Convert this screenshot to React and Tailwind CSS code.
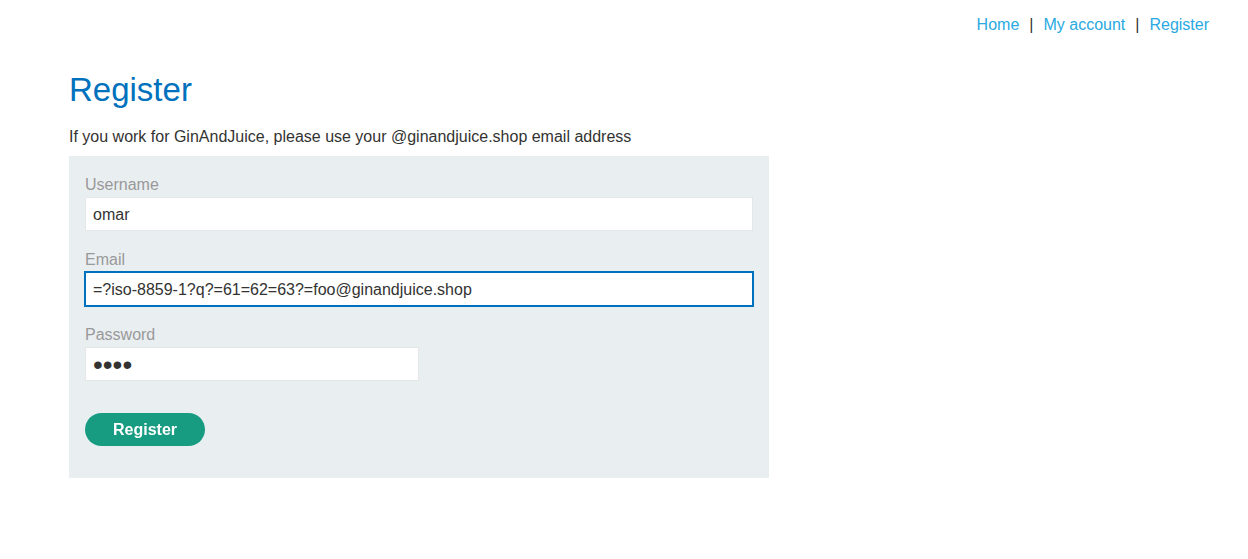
import React, { useEffect, useRef } from 'react';

// Register page: top nav links, heading, and the grey form panel.

const email = '=?iso-8859-1?q?=61=62=63?=foo@ginandjuice.shop';

export default function App() {
  const emailRef = useRef(null);

  useEffect(() => {
    const el = emailRef.current;
    if (!el) return;
    el.focus();
    el.setSelectionRange(email.length, email.length);
  }, []);

  return (
    <div className="min-h-[559px] bg-white font-['Liberation_Sans',Arial,sans-serif] text-[16px] text-[#333332]">
      <nav className="flex justify-end items-center gap-[10px] pt-[13px] pr-[39px] leading-6">
        <a href="#" className="text-[#29a9e1]">Home</a>
        <span className="text-[#333332]">|</span>
        <a href="#" className="text-[#29a9e1]">My account</a>
        <span className="text-[#333332]">|</span>
        <a href="#" className="text-[#29a9e1]">Register</a>
      </nav>

      <main className="pl-[69px] pt-[33px]">
        <h1 className="text-[33px] leading-[40px] text-[#0071bc]">Register</h1>
        <p className="mt-[15px] leading-6">
          If you work for GinAndJuice, please use your @ginandjuice.shop email address
        </p>

        <form
          className="mt-[7px] w-[700px] bg-[#e9eef1] px-4 pt-4 pb-8"
          onSubmit={(e) => e.preventDefault()}
        >
          <label className="block pt-px leading-6 text-[#999]">Username</label>
          <input
            type="text"
            defaultValue="omar"
            className="block w-full h-[34px] bg-white border border-[#e4e6e7] pl-[7px] pt-[2px] text-[#333332] outline-none"
          />

          <label className="block mt-4 pt-px leading-6 text-[#999]">Email</label>
          <input
            ref={emailRef}
            type="text"
            defaultValue={email}
            className="block w-full h-[34px] bg-white border border-[#0071bc] outline outline-1 outline-[#0071bc] pl-[7px] pt-[2px] text-[#333332]"
          />

          <label className="block mt-4 pt-px leading-6 text-[#999]">Password</label>
          <input
            type="password"
            defaultValue="abcd"
            className="block w-[334px] h-[34px] bg-white border border-[#e4e6e7] pl-[7px] pt-[2px] text-[28px] text-[#333332] outline-none"
          />

          <button
            type="submit"
            className="mt-8 block w-[120px] h-[33px] rounded-full bg-[#179c81] text-white font-bold"
          >
            Register
          </button>
        </form>
      </main>
    </div>
  );
}
